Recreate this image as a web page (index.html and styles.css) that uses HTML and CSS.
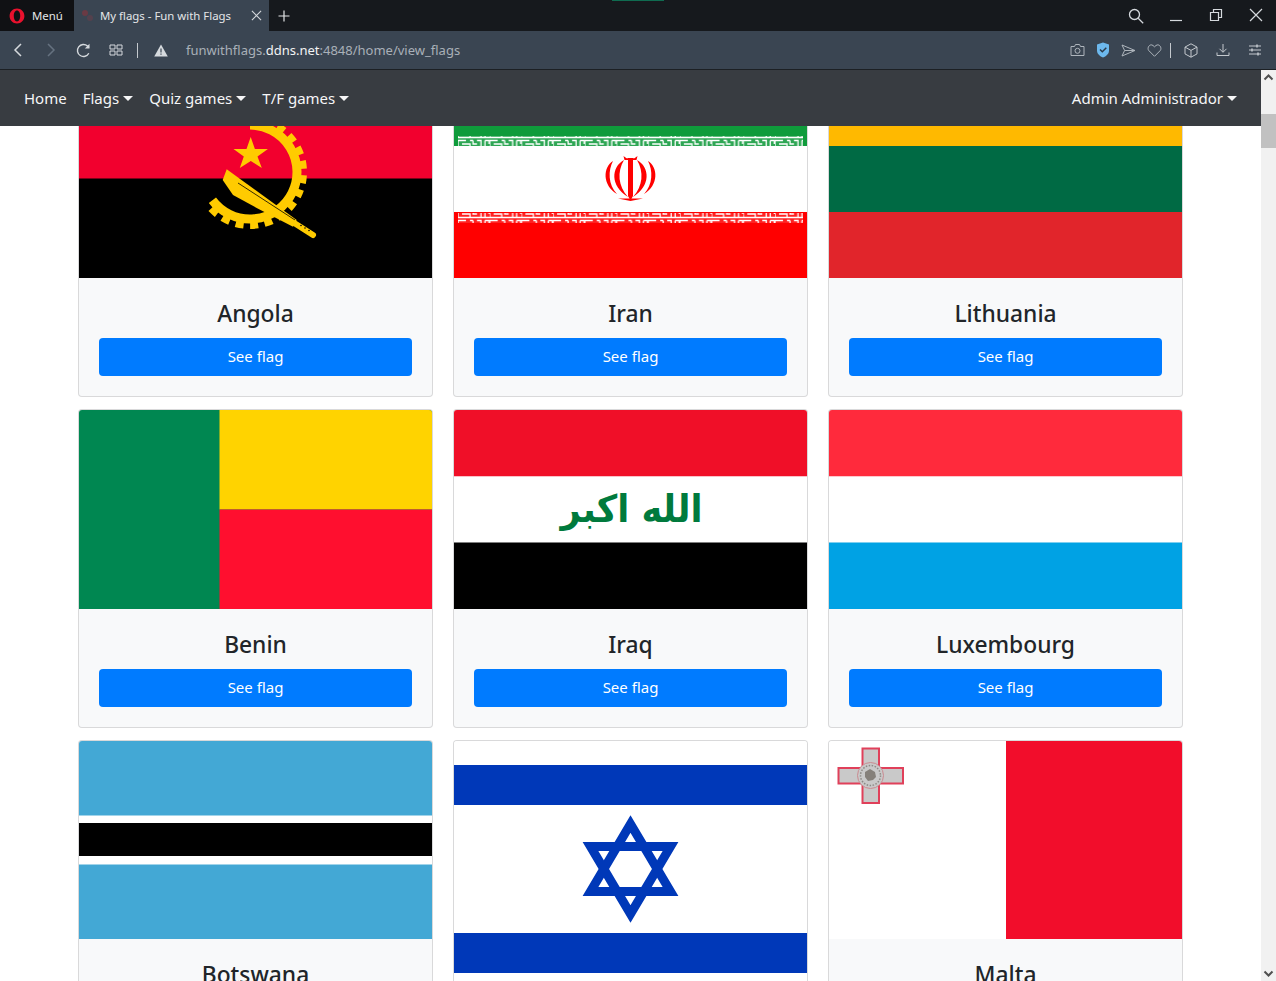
FILE: index.html

```html
<!DOCTYPE html>
<html lang="en">
<head>
  <meta charset="UTF-8" />
  <title>My flags - Fun with Flags</title>
  <link rel="stylesheet" href="styles.css">
</head>
<body>
  <!-- Browser tab strip -->
  <div class="tabbar">
    <div class="opera-menu">
      <svg class="icon" width="16" height="16" viewBox="0 0 16 16"><path fill="#e8112d" fill-rule="evenodd" d="M8 .5C3.800.5.600 3.800.600 8s3.200 7.500 7.400 7.500 7.400-3.300 7.400-7.500S12.200.500 8 .500zM8 2.600c2 0 3.200 2.500 3.200 5.400S10 13.400 8 13.400 4.800 10.900 4.800 8 6 2.600 8 2.600z"/></svg>
      <span>Menú</span>
    </div>
    <div class="tab">
      <svg class="favicon" width="14" height="14" viewBox="0 0 14 14"><circle cx="4" cy="4" r="3" fill="#6a3a44"/><circle cx="9" cy="9" r="3" fill="#54414d"/></svg>
      <span class="tab-title">My flags - Fun with Flags</span>
      <svg class="icon tab-close" width="12" height="12" viewBox="0 0 12 12"><path d="M1 1l10 10M11 1L1 11" stroke="#d5d9dd" stroke-width="1.200"/></svg>
    </div>
    <svg class="icon new-tab" width="12" height="12" viewBox="0 0 12 12"><path d="M6 .5v11M.5 6h11" stroke="#e4e6e8" stroke-width="1.200"/></svg>
    <div class="tab-glow"></div>
    <div class="window-controls">
      <span class="win-btn"><svg width="16" height="16" viewBox="0 0 16 16"><circle cx="6.500" cy="6.500" r="5" fill="none" stroke="#d5d9dd" stroke-width="1.300"/><path d="M10.200 10.200l5 5" stroke="#d5d9dd" stroke-width="1.300"/></svg></span>
      <span class="win-btn"><svg width="14" height="14" viewBox="0 0 14 14"><path d="M1 12.500h12" stroke="#d5d9dd" stroke-width="1.200"/></svg></span>
      <span class="win-btn"><svg width="14" height="14" viewBox="0 0 14 14"><path d="M1.500 4.500h8v8h-8zM4.500 4.500v-3h8v8h-3" fill="none" stroke="#d5d9dd" stroke-width="1.200"/></svg></span>
      <span class="win-btn"><svg width="14" height="14" viewBox="0 0 14 14"><path d="M1 1l12 12M13 1L1 13" stroke="#d5d9dd" stroke-width="1.200"/></svg></span>
    </div>
  </div>

  <!-- Address bar -->
  <div class="addressbar">
    <div class="addr-left">
      <span class="addr-btn"><svg width="12" height="14" viewBox="0 0 12 14"><path d="M9 1L3 7l6 6" fill="none" stroke="#d5d9dd" stroke-width="1.500"/></svg></span>
      <span class="addr-btn"><svg width="12" height="14" viewBox="0 0 12 14"><path d="M3 1l6 6-6 6" fill="none" stroke="#667280" stroke-width="1.500"/></svg></span>
      <span class="addr-btn"><svg width="15" height="15" viewBox="0 0 15 15"><path d="M12.800 10.200A6 6 0 1 1 11.500 3l1.500 1.500" fill="none" stroke="#d5d9dd" stroke-width="1.400"/><path d="M13.500 .8v4.700H8.800z" fill="#d5d9dd"/></svg></span>
      <span class="addr-btn"><svg width="14" height="12" viewBox="0 0 14 12"><path d="M1 1h5v4H1zM8 1h5v4H8zM1 7h5v4H1zM8 7h5v4H8z" fill="none" stroke="#d5d9dd" stroke-width="1"/></svg></span>
      <span class="addr-sep"></span>
      <svg class="addr-warn" width="14" height="13" viewBox="0 0 14 13"><path d="M7 .5l6.800 12H.2z" fill="#d5d9dd"/><path d="M6.400 4.500h1.200v4H6.400zM6.400 9.500h1.200v1.300H6.400z" fill="#3a4552"/></svg>
      <span class="url">funwithflags.<b>ddns.net</b>:4848/home/view_flags</span>
    </div>
    <div class="addr-right">
      <span class="tool-btn"><svg width="15" height="14" viewBox="0 0 15 14"><path d="M1 3.500h3.500l1-2h4l1 2H14v9H1z" fill="none" stroke="#aeb5bc"/><circle cx="7.500" cy="7.800" r="2.500" fill="none" stroke="#aeb5bc"/></svg></span>
      <span class="tool-btn"><svg width="14" height="16" viewBox="0 0 14 16"><path d="M7 .5l6 2v6c0 3.500-3 5.800-6 7-3-1.200-6-3.500-6-7v-6z" fill="#6db9ee"/><path d="M4 7.500l2.300 2.300L10.300 5.800" fill="none" stroke="#2a3a4a" stroke-width="1.500"/></svg></span>
      <span class="tool-btn"><svg width="15" height="13" viewBox="0 0 15 13"><path d="M1 1l13 5.500L1 12l2.600-5.500zM3.600 6.500H14" fill="none" stroke="#aeb5bc"/></svg></span>
      <span class="tool-btn"><svg width="15" height="13" viewBox="0 0 15 13"><path d="M7.500 12.300L1.800 6.600C-.4 4 2.800-.9 6 1.500l1.500 1.300L9 1.500c3.200-2.400 6.400 2.500 4.200 5.100z" fill="none" stroke="#aeb5bc"/></svg></span>
      <span class="tool-sep"></span>
      <span class="tool-btn tool-cube"><svg width="14" height="15" viewBox="0 0 14 15"><path d="M7 .8l6 3.300v6.800l-6 3.300-6-3.300V4.100zM1 4.100l6 3.300 6-3.300M7 7.400v6.800" fill="none" stroke="#c4c9ce"/></svg></span>
      <span class="tool-btn tool-down"><svg width="14" height="14" viewBox="0 0 14 14"><path d="M7 1v8M3.500 5.800L7 9.300l3.500-3.500M1 9.500v3h12v-3" fill="none" stroke="#c4c9ce"/></svg></span>
      <span class="tool-btn tool-easy"><svg width="14" height="12" viewBox="0 0 14 12"><path d="M1 2h12M1 6h12M1 10h12" stroke="#c4c9ce"/><path d="M9 .5v3M4 4.500v3M10 8.500v3" stroke="#c4c9ce" stroke-width="1.500"/></svg></span>
    </div>
  </div>

  <div class="window">
    <div class="page">
      <nav class="navbar">
        <a class="nav-link">Home</a>
        <a class="nav-link caret">Flags</a>
        <a class="nav-link caret">Quiz games</a>
        <a class="nav-link caret">T/F games</a>
        <a class="nav-link caret nav-user">Admin Administrador</a>
      </nav>

      <div class="content">
        <div class="flag-grid">

          <div class="card">
            <svg class="flag" viewBox="0 0 353 199">
              <rect width="353" height="100" fill="#f2002e"/>
              <rect y="99.500" width="353" height="100" fill="#000"/>
              <g transform="translate(-79 -79)">
                <path fill="#ffcb00" d="M250.700 137l4.200 12h13l-10.400 7.500 4.300 11.500-11-7-11 7 4-11.500-10.300-7.500h13z"/>
                <path d="M250 125A47 47 0 1 1 212.400 200.200" fill="none" stroke="#ffcb00" stroke-width="9"/>
                <path d="M250 118.500A53.500 53.500 0 1 1 207.200 204.100" fill="none" stroke="#ffcb00" stroke-width="7" stroke-dasharray="8 6.500"/>
                <path fill="#ffcb00" d="M226.700 169.300L296.700 220 293 226.700 256.700 208 233 195 222.700 180z"/>
                <path d="M238 183L295 220" stroke="#000" stroke-width=".8"/>
                <path d="M295 223.500L313 235" stroke="#ffcb00" stroke-width="6" stroke-linecap="round"/>
                <circle cx="301" cy="225.500" r=".8" fill="#000"/><circle cx="305" cy="228" r=".8" fill="#000"/><circle cx="309" cy="230.500" r=".8" fill="#000"/>
              </g>
            </svg>
            <div class="card-body"><h4>Angola</h4><a class="btn">See flag</a></div>
          </div>

          <div class="card">
            <svg class="flag" viewBox="0 0 353 199">
              <defs>
                <pattern id="kufi" width="31.700" height="10" patternUnits="userSpaceOnUse" x="4" y="0">
                  <path d="M0 1.500H8M0 1.500V8.500M0 8.500H31.700M4 5H12V8.500M12 1.500H15M15 1.500V5H19M19 1.500H23V5M23 1.500V8.500M27 1.500V8.500M27 1.500H31V5" fill="none" stroke="#fff" stroke-width="1.300"/>
                </pattern>
              </defs>
              <rect width="353" height="67" fill="#0f9b3b"/>
              <rect y="67" width="353" height="66" fill="#fff"/>
              <rect y="133" width="353" height="66" fill="#f00"/>
              <rect x="4" y="57" width="345" height="10" fill="#2ea654"/>
              <rect x="4" y="57" width="345" height="10" fill="url(#kufi)"/>
              <rect x="4" y="134" width="345" height="10" fill="#f22"/>
              <rect x="4" y="134" width="345" height="10" fill="url(#kufi)"/>
              <g transform="translate(-454 -79)" fill="#f00">
                <path d="M628 158h5v38l-2.500 4.500-2.500-4.500z"/>
                <path d="M623.500 156l3 2.200h8l3-2.200-1 4h-12z"/>
                <path d="M624 160C611 167 610 186 628 197 618 186 617 172 624 160z"/>
                <path d="M613 161C603 167 602 185 617 194 608 185 608 170 613 161z"/>
                <g transform="translate(1261 0) scale(-1 1)">
                  <path d="M624 160C611 167 610 186 628 197 618 186 617 172 624 160z"/>
                  <path d="M613 161C603 167 602 185 617 194 608 185 608 170 613 161z"/>
                </g>
                <path d="M618 198.500h25l-12.500 2.500z"/>
              </g>
            </svg>
            <div class="card-body"><h4>Iran</h4><a class="btn">See flag</a></div>
          </div>

          <div class="card">
            <svg class="flag" viewBox="0 0 353 199">
              <rect width="353" height="67" fill="#ffb900"/>
              <rect y="67" width="353" height="66" fill="#006a44"/>
              <rect y="133" width="353" height="66" fill="#e1252b"/>
            </svg>
            <div class="card-body"><h4>Lithuania</h4><a class="btn">See flag</a></div>
          </div>

          <div class="card">
            <svg class="flag" viewBox="0 0 353 199">
              <rect width="353" height="199" fill="#008751"/>
              <rect x="140.500" width="212.500" height="99.500" fill="#ffd300"/>
              <rect x="140.500" y="99.500" width="212.500" height="99.500" fill="#ff0f2f"/>
            </svg>
            <div class="card-body"><h4>Benin</h4><a class="btn">See flag</a></div>
          </div>

          <div class="card">
            <svg class="flag" viewBox="0 0 353 199">
              <rect width="353" height="66.500" fill="#f00f28"/>
              <rect y="66.500" width="353" height="66" fill="#fff"/>
              <rect y="132.500" width="353" height="66.500" fill="#000"/>
              <text class="takbir" x="177.500" y="112" text-anchor="middle" textLength="142" lengthAdjust="spacingAndGlyphs">الله اكبر</text>
            </svg>
            <div class="card-body"><h4>Iraq</h4><a class="btn">See flag</a></div>
          </div>

          <div class="card">
            <svg class="flag" viewBox="0 0 353 199">
              <rect width="353" height="66.500" fill="#ff2a3c"/>
              <rect y="66.500" width="353" height="66" fill="#fff"/>
              <rect y="132.500" width="353" height="66.500" fill="#00a2e4"/>
            </svg>
            <div class="card-body"><h4>Luxembourg</h4><a class="btn">See flag</a></div>
          </div>

          <div class="card">
            <svg class="flag flag-short" viewBox="0 0 353 198">
              <rect width="353" height="198" fill="#43a8d5"/>
              <rect y="74.500" width="353" height="49" fill="#fff"/>
              <rect y="82" width="353" height="33" fill="#000"/>
            </svg>
            <div class="card-body"><h4>Botswana</h4><a class="btn">See flag</a></div>
          </div>

          <div class="card">
            <svg class="flag flag-tall" viewBox="0 0 353 256">
              <rect width="353" height="256" fill="#fff"/>
              <rect y="24" width="353" height="40" fill="#0038b8"/>
              <rect y="192" width="353" height="40" fill="#0038b8"/>
              <g transform="translate(-454 -741)" fill="none" stroke="#0038b8" stroke-width="9" stroke-miterlimit="6">
                <path d="M630.500 824l40 67.500h-80z"/>
                <path d="M630.500 914l40-67.500h-80z"/>
              </g>
            </svg>
            <div class="card-body"><h4>Israel</h4><a class="btn">See flag</a></div>
          </div>

          <div class="card">
            <svg class="flag flag-short" viewBox="0 0 353 198">
              <rect width="353" height="198" fill="#fff"/>
              <rect x="177" width="176" height="198" fill="#f20d2b"/>
              <g transform="translate(-829 -741)">
                <path d="M862.500 748.500h16.500v19.500h24v15.500h-24v19.500h-16.500v-19.500h-24v-15.500h24z" fill="#c9c9c9" stroke="#e0405a" stroke-width="2"/>
                <circle cx="870.500" cy="775.500" r="13" fill="#c9c9c9" stroke="#c98a90" stroke-width="1"/>
                <circle cx="870.500" cy="775.500" r="10" fill="none" stroke="#8d8a86" stroke-width="1.500" stroke-dasharray="1.500 1.500"/>
                <path d="M865 772l5-3 5 3 1 5-3 3-5 1-3-4z" fill="#85807a"/>
              </g>
            </svg>
            <div class="card-body"><h4>Malta</h4><a class="btn">See flag</a></div>
          </div>

        </div>
      </div>
    </div>

    <div class="scrollbar">
      <svg width="15" height="15" viewBox="0 0 15 15"><path d="M3.500 9.500l4-4 4 4" fill="none" stroke="#505050" stroke-width="2"/></svg>
      <div class="scroll-track"><div class="scroll-thumb"></div></div>
      <svg width="15" height="15" viewBox="0 0 15 15"><path d="M3.500 5.500l4 4 4-4" fill="none" stroke="#505050" stroke-width="2"/></svg>
    </div>
  </div>
</body>
</html>
```

FILE: styles.css

```css
html, body {
  height: 100%;
}

body {
  margin: 0;
  display: flex;
  flex-direction: column;
  overflow: hidden;
  font-family: "Noto Sans", "Open Sans", sans-serif;
  background: #fff;
  color: #212529;
}

svg {
  display: block;
  flex-shrink: 0;
}

/* browser chrome */
.tabbar {
  position: relative;
  display: flex;
  align-items: center;
  height: 31px;
  flex-shrink: 0;
  background: #16191d;
  color: #e4e6e8;
  font-size: 11.4px;
}

.opera-menu {
  display: flex;
  align-items: center;
  gap: 7px;
  width: 65px;
  height: 100%;
  padding-left: 9px;
  background: #101114;
}

.tab {
  display: flex;
  align-items: center;
  width: 195px;
  height: 100%;
  padding-left: 7px;
  box-sizing: border-box;
  background: #3a4552;
}

.tab-title {
  margin-left: 5px;
  white-space: nowrap;
}

.tab-close {
  margin-left: auto;
  width: 11px;
  height: 11px;
  margin-right: 7px;
}

.new-tab {
  margin-left: 9px;
}

.tab-glow {
  position: absolute;
  left: 612px;
  top: 0;
  width: 52px;
  height: 1px;
  background: #0f6b50;
}

.window-controls {
  display: flex;
  margin-left: auto;
}

.win-btn {
  display: flex;
  justify-content: center;
  width: 40px;
}

.addressbar {
  display: flex;
  align-items: center;
  justify-content: space-between;
  height: 38px;
  flex-shrink: 0;
  background: #3a4552;
  border-bottom: 1px solid #1c2024;
}

.addr-left,
.addr-right {
  display: flex;
  align-items: center;
}

.addr-left {
  padding-left: 2px;
}

.addr-btn {
  display: flex;
  justify-content: center;
  width: 32.500px;
}

.addr-sep {
  width: 1px;
  height: 15px;
  margin-left: 5px;
  background: #c4c9ce;
}

.addr-warn {
  margin-left: 16px;
}

.url {
  margin-left: 18px;
  font-size: 13px;
  color: #a9b0b8;
  white-space: nowrap;
}

.url b {
  font-weight: 400;
  color: #f2f3f4;
}

.addr-right {
  padding-right: 8px;
}

.tool-btn {
  display: flex;
  justify-content: center;
  width: 25.600px;
}

.tool-sep {
  width: 1px;
  height: 15px;
  margin-left: 3px;
  background: #c4c9ce;
}

.tool-cube {
  margin-left: 7px;
}

.tool-down {
  margin-left: 6px;
}

.tool-easy {
  margin-left: 7px;
}

/* page */
.window {
  display: flex;
  flex: 1;
  min-height: 0;
}

.page {
  display: flex;
  flex-direction: column;
  flex: 1;
  min-width: 0;
}

.navbar {
  display: flex;
  align-items: center;
  height: 56px;
  flex-shrink: 0;
  padding: 0 16px;
  background: #383c41;
}

.nav-link {
  padding: 0 8px;
  color: #f6f6f7;
  font-size: 15px;
  white-space: nowrap;
}

.caret::after {
  content: "";
  display: inline-block;
  margin-left: 4px;
  vertical-align: 3px;
  border-top: 5px solid #f6f6f7;
  border-right: 5px solid transparent;
  border-left: 5px solid transparent;
}

.nav-user {
  margin-left: auto;
}

.content {
  flex: 1;
  min-height: 0;
  overflow: hidden;
}

.flag-grid {
  display: grid;
  grid-template-columns: repeat(3, 355px);
  column-gap: 20px;
  row-gap: 12px;
  margin-top: -48px;
  padding-left: 78px;
}

.card {
  display: flex;
  flex-direction: column;
  background: #f8f9fa;
  border: 1px solid rgba(0, 0, 0, 0.125);
  border-radius: 4px;
  overflow: hidden;
}

.flag {
  width: 353px;
  height: 199px;
}

.flag-short {
  height: 198px;
}

.flag-tall {
  height: 256px;
}

.takbir {
  font-family: "DejaVu Sans", sans-serif;
  font-size: 38px;
  font-weight: 700;
  fill: #007a3d;
}

.card-body {
  padding: 21px 20px 20px;
  text-align: center;
}

.card-body h4 {
  margin: 0 0 10px;
  font-size: 22.800px;
  font-weight: 500;
  line-height: 29px;
}

.btn {
  display: block;
  height: 38px;
  line-height: 37px;
  background: #007bff;
  border-radius: 4px;
  color: #fff;
  font-size: 15px;
}

.scrollbar {
  display: flex;
  flex-direction: column;
  width: 15px;
  flex-shrink: 0;
  background: #f1f1f1;
}

.scroll-track {
  flex: 1;
  padding-top: 29px;
}

.scroll-thumb {
  height: 34px;
  background: #c1c1c1;
}
```
